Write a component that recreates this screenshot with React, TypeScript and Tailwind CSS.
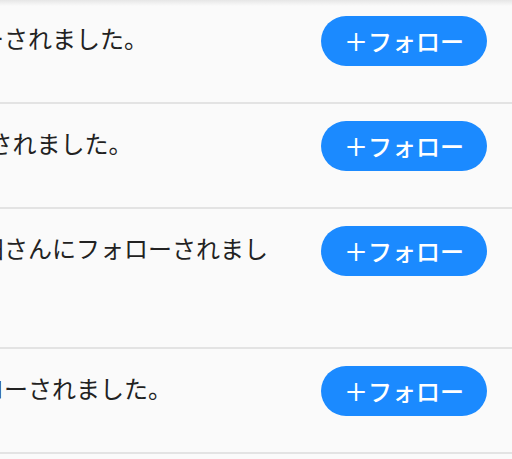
import React from 'react'

type Follower = {
    id: number
    name: string
}

const followers: Follower[] = [
    { id: 1, name: '佐藤翔' },
    { id: 2, name: 'Kenji' },
    { id: 3, name: '週末カフェ巡りの山田' },
    { id: 4, name: '高橋美咲' },
]

const jp = { fontFamily: '"Noto Sans CJK JP", "Noto Sans", sans-serif' }

function FollowRow({ follower }: { follower: Follower }) {
    return (
        <div className="flex items-start pt-[17px] pr-[25px] border-b-2 border-[#e3e3e3]">
            <div className="flex-1 min-w-0 -ml-[236px] pt-[4px] pb-[47px]">
                <p className="text-[24px] leading-[35px] text-[#222222]" style={jp}>
                    {follower.name}さんにフォローされました。
                </p>
            </div>

            <button
                className="ml-[32px] shrink-0 w-[166px] h-[50px] rounded-full bg-[#1b8aff] text-white text-[24px] font-medium flex items-center justify-center"
                style={jp}
            >
                ＋フォロー
            </button>
        </div>
    )
}

export default function App() {
    return (
        <div className="relative w-[512px] h-[459px] overflow-hidden bg-[#fafafa]">
            <div className="-mt-px">
                {followers.map((f) => (
                    <FollowRow key={f.id} follower={f} />
                ))}
            </div>
            {/* header shadow */}
            <div className="absolute top-0 left-0 right-0 h-[6px] bg-gradient-to-b from-[#e6e6e6] to-transparent" />
        </div>
    )
}
